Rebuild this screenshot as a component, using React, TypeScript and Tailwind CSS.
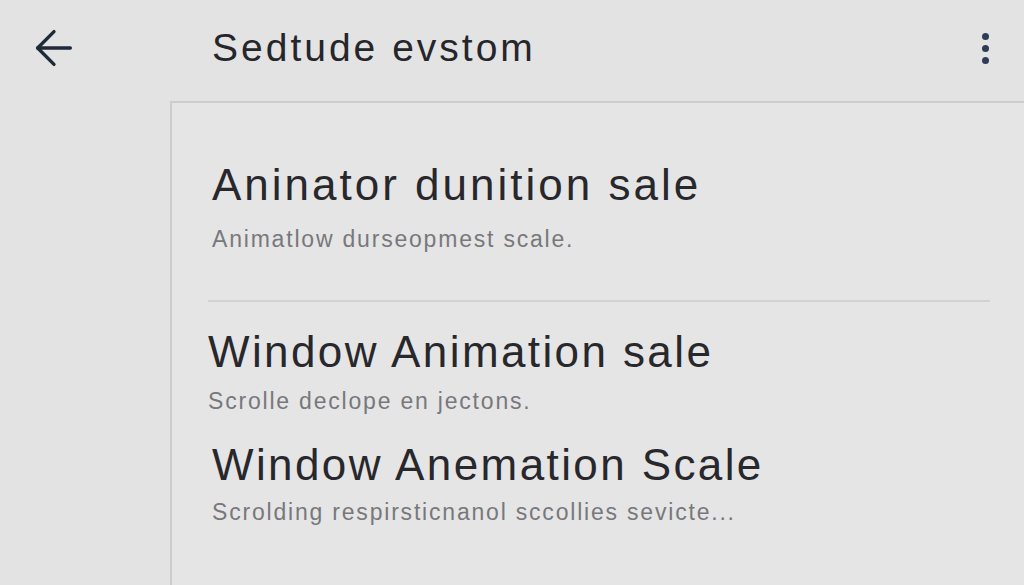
import { ArrowLeft } from "lucide-react";

const font = { fontFamily: '"Liberation Sans", Arial, sans-serif' };

function Setting({
  title,
  subtitle,
  className,
  gap,
  track = "tracking-[2.4px]",
}: {
  title: string;
  subtitle: string;
  className?: string;
  gap: string;
  track?: string;
}) {
  return (
    <div className={className}>
      <div className={`${track} text-[44px] leading-[50px] text-[#28282c]`}>{title}</div>
      <div className={`${gap} text-[23px] leading-[28px] tracking-[1.8px] text-[#78787c]`}>{subtitle}</div>
    </div>
  );
}

export default function App() {
  return (
    <div className="h-[585px] w-[1024px] overflow-hidden bg-[#e3e3e3]" style={font}>
      <header className="flex h-[101px] items-start pt-[25px]">
        <div className="flex w-[212px] pl-[26px]">
          <ArrowLeft className="mt-[-5px] h-[56px] w-[56px] text-[#1e2a3a]" strokeWidth={1.45} />
        </div>
        <h1 className="flex-1 text-[39px] leading-[46px] tracking-[3px] text-[#26262a]">Sedtude evstom</h1>
        <div className="flex flex-col gap-[5px] pr-[35px] pt-[8px]">
          <span className="h-[7px] w-[7px] rounded-full bg-[#2e3c55]" />
          <span className="h-[7px] w-[7px] rounded-full bg-[#2e3c55]" />
          <span className="h-[7px] w-[7px] rounded-full bg-[#2e3c55]" />
        </div>
      </header>
      <main className="ml-[170px] h-[484px] border-l-2 border-t-2 border-[#cdcdcd] bg-[#e5e5e5] pl-[40px] pr-[34px] pt-[57px]">
        <Setting
          gap="mt-[15px]"
          track="tracking-[3px]"
          title="Aninator dunition sale"
          subtitle="Animatlow durseopmest scale."
        />
        <div className="ml-[-4px] mt-[47px] border-t-2 border-[#d2d2d2]" />
        <Setting
          className="ml-[-4px] mt-[25px]"
          gap="mt-[10px]"
          title="Window Animation sale"
          subtitle="Scrolle declope en jectons."
        />
        <Setting
          className="mt-[25px]"
          gap="mt-[8px]"
          title="Window Anemation Scale"
          subtitle="Scrolding respirsticnanol sccollies sevicte..."
        />
      </main>
    </div>
  );
}
